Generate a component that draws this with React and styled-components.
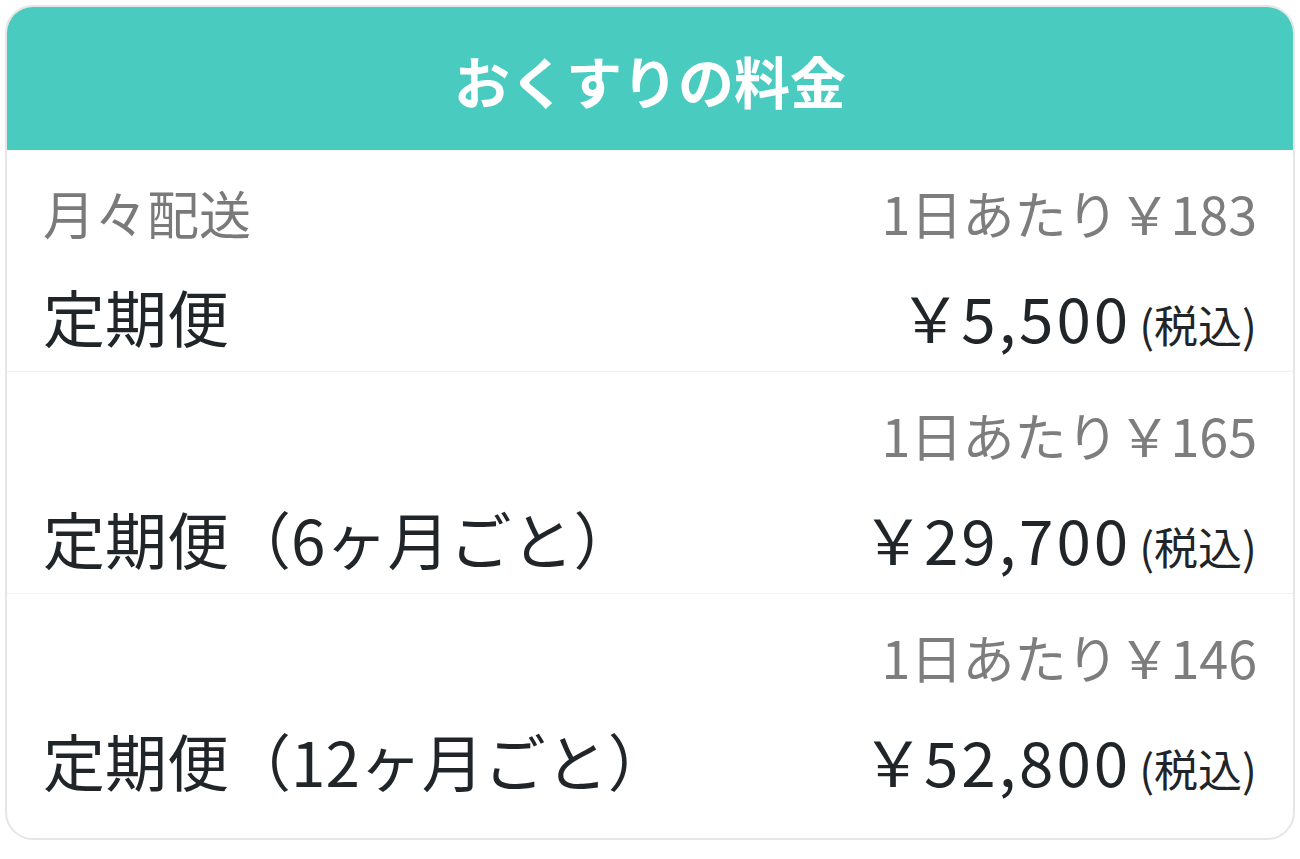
import React from 'react';
import styled, { createGlobalStyle } from 'styled-components';

const GlobalStyle = createGlobalStyle`
  html, body {
    margin: 0;
    padding: 0;
    background: #ffffff;
  }
  body {
    font-family: "Noto Sans CJK JP", "Noto Sans", sans-serif;
  }
`;

const Card = styled.div`
  margin: 5px;
  width: 1290px;
  box-sizing: border-box;
  border: 2px solid #e6e6e6;
  border-radius: 28px;
  overflow: hidden;
  background: #fff;
  padding-bottom: 23px;
`;

const Header = styled.div`
  height: 145px;
  margin: -2px -2px 0;
  background: #4acbc0;
  display: flex;
  align-items: center;
  justify-content: center;
  color: #fff;
  font-size: 56px;
  font-weight: 700;
  padding-top: 4px;
  box-sizing: border-box;
`;

const Row = styled.div`
  padding: 32px 36px 20px 36px;
  border-bottom: ${(p) => (p.last ? 'none' : '1px solid #f1f1f1')};
`;

const Line = styled.div`
  display: flex;
  justify-content: space-between;
  align-items: center;
  height: ${(p) => p.h}px;
  white-space: nowrap;
`;

const Spacer = styled.div`
  height: 39px;
`;

const Category = styled.span`
  color: #7a7a7a;
  font-size: 52px;
  font-weight: 400;
`;

const Daily = styled.span`
  color: #7d7d7d;
  font-size: 52px;
  font-weight: 400;
  margin-left: auto;
`;

const Plan = styled.span`
  color: #1f2528;
  font-size: 62px;
  font-weight: 400;
`;

const Price = styled.span`
  color: #1f2528;
  font-size: 62px;
  font-weight: 400;
  display: flex;
  align-items: baseline;
`;

const Digits = styled.span`
  letter-spacing: 3px;
`;

const Tax = styled.span`
  font-size: 44px;
  margin-left: 8px;
`;

const plans = [
  { category: '月々配送', daily: '183', name: '定期便', price: '5,500' },
  { category: '', daily: '165', name: '定期便（6ヶ月ごと）', price: '29,700' },
  { category: '', daily: '146', name: '定期便（12ヶ月ごと）', price: '52,800' },
];

const App = () => {
  return (
    <>
      <GlobalStyle />
      <Card>
        <Header>おくすりの料金</Header>
        {plans.map((p, i) => (
          <Row key={p.price} last={i === plans.length - 1}>
            <Line h={60}>
              {p.category && <Category>{p.category}</Category>}
              <Daily>1日あたり￥{p.daily}</Daily>
            </Line>
            <Spacer />
            <Line h={70}>
              <Plan>{p.name}</Plan>
              <Price>
                ￥<Digits>{p.price}</Digits>
                <Tax>(税込)</Tax>
              </Price>
            </Line>
          </Row>
        ))}
      </Card>
    </>
  );
};

export default App;
